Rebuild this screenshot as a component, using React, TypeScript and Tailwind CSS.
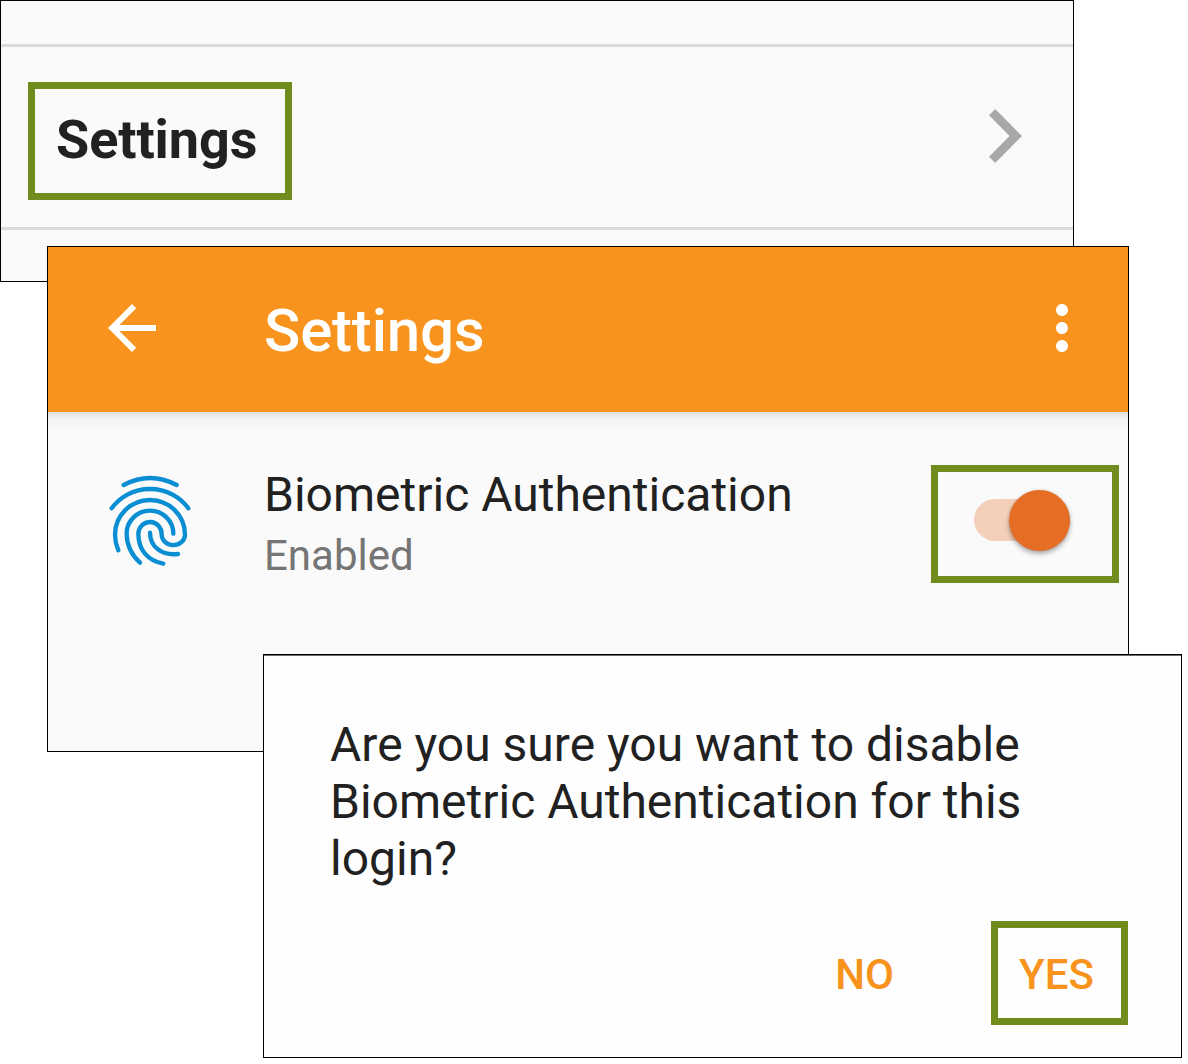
import React from 'react';
import { MdArrowBack, MdMoreVert } from 'react-icons/md';

interface HighlightProps {
  className?: string;
  children: React.ReactNode;
}

const Highlight: React.FC<HighlightProps> = ({ className = '', children }) => (
  <div className={`box-border flex shrink-0 items-center border-[7px] border-[#708c1c] ${className}`}>{children}</div>
);

const ChevronIcon = () => (
  <svg width="33" height="54" viewBox="0 0 33 54" fill="#a9a9a9">
    <path d="M6.2 0 33 27 6.2 54 0 47.7 20.5 27 0 6.3z" />
  </svg>
);

const FingerprintIcon = () => (
  <svg width="84" height="92" viewBox="54 60 252 276" fill="none" stroke="#0a8ed3" strokeWidth="13" strokeLinecap="round" strokeLinejoin="round">
    <path d="M101 90Q180 48 260 90" />
    <path d="M65 160A143 143 0 0 1 295 160" />
    <path d="M85 286Q75 262 75 239A105 104 0 0 1 285 239A35 32 0 0 1 215 238A35 36 0 0 0 145 236C145 286 175 318 220 326" />
    <path d="M150 323Q110 286 110 236A70 69 0 0 1 250 236" />
    <path d="M180 233C180 275 215 303 264 297" />
  </svg>
);

const Toggle = () => (
  <div className="flex h-[42px] w-[96px] items-center justify-end rounded-full bg-[#f4d0b9]">
    <div className="size-[61px] shrink-0 rounded-full bg-[#e66d24] shadow-[0_3px_5px_rgba(0,0,0,0.3),0_0_3px_rgba(0,0,0,0.12)]" />
  </div>
);

const MenuPanel = () => (
  <section className="h-[282px] w-[1074px] border border-black bg-[#fafafa]">
    <div className="h-[46px] border-b-[3px] border-[#dcdcdc]" />
    <div className="flex h-[183px] items-start justify-between border-b-[3px] border-[#dcdcdc] pl-[27px] pr-[51px]">
      <Highlight className="mt-[35px] h-[118px] w-[264px] pb-[2px] pl-[21px]">
        <span className="text-[54px] leading-[64px] font-bold tracking-[-0.1px]">Settings</span>
      </Highlight>
      <div className="mt-[62px]">
        <ChevronIcon />
      </div>
    </div>
  </section>
);

const SettingsPanel = () => (
  <section className="relative -mt-[36px] ml-[47px] h-[506px] w-[1082px] border border-black bg-[#fafafa]">
    <header className="flex h-[165px] items-start bg-[#f8931d] pt-[45px] pl-12 pr-[30px] text-white">
      <MdArrowBack size={72} />
      <h1 className="mt-[4px] ml-[96px] flex-1 text-[60px] leading-[70px] font-medium tracking-[-0.2px]">Settings</h1>
      <MdMoreVert size={72} />
    </header>
    <div className="h-[17px] bg-linear-to-b from-[#dedede] via-[#f3f3f3] via-40% to-[#fafafa]" />
    <div className="flex items-start pl-[60px] pr-[9px]">
      <div className="mt-[46px]">
        <FingerprintIcon />
      </div>
      <div className="ml-[72px] mt-[38px] flex-1">
        <p className="text-[48px] leading-[56px] whitespace-nowrap">Biometric Authentication</p>
        <p className="mt-[8px] text-[42px] leading-[50px] text-[#757575]">Enabled</p>
      </div>
      <Highlight className="mt-[36px] h-[118px] w-[188px] pb-[8px] pl-[36px]">
        <Toggle />
      </Highlight>
    </div>
  </section>
);

const ConfirmDialog = () => (
  <section className="relative -mt-[98px] ml-[263px] h-[404px] w-[919px] border border-black bg-[#fefefe] pl-[66px] pr-[53px] shadow-[inset_0_1px_0_#696969]">
    <p className="pt-[61px] text-[48px] leading-[57px] whitespace-nowrap">
      Are you sure you want to disable
      <br />
      Biometric Authentication for this
      <br />
      login?
    </p>
    <div className="mt-[34px] flex items-center justify-end text-[42px] leading-[50px] font-medium text-[#f8931d]">
      <button className="mt-[4px] mr-[97px]">NO</button>
      <Highlight className="h-[104px] w-[137px] pt-[4px] pl-[21px]">
        <button>YES</button>
      </Highlight>
    </div>
  </section>
);

const App: React.FC = () => (
  <main className="h-[1064px] w-[1188px] overflow-hidden bg-white font-[Roboto,sans-serif] text-[#212121]">
    <MenuPanel />
    <SettingsPanel />
    <ConfirmDialog />
  </main>
);

export default App;
